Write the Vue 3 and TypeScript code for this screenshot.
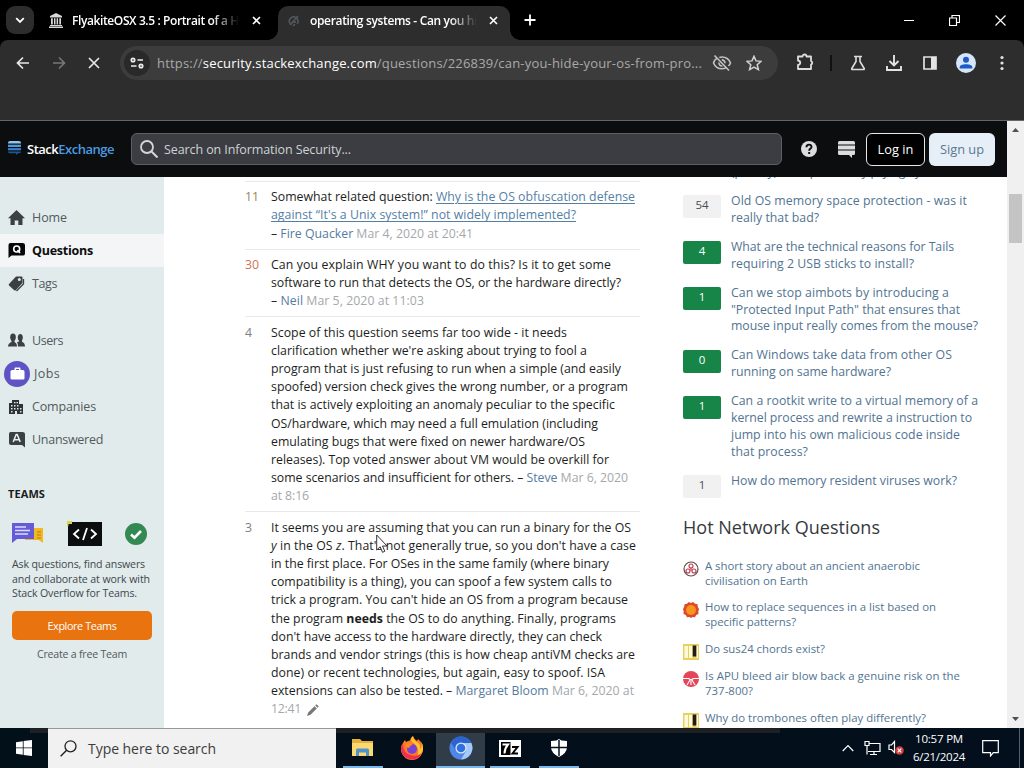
<script setup lang="ts">
import type { Directive } from 'vue'

interface Seg { t: string; k?: 'link' | 'user' | 'date' | 'em' | 'strong' | 'edit' }
interface Line { w: number; s: Seg[] }
interface Comment { score: number; tone: string; lines: Line[] }
interface TextLine { w: number; t: string }

/* Spreads a line's letters so that it takes the given measure. */
const vFit: Directive<HTMLElement, number> = {
  mounted(el, { value }) {
    const n = Math.max(1, (el.textContent ?? '').length)
    const gap = (value - el.getBoundingClientRect().width) / n
    el.style.letterSpacing = gap.toFixed(3) + 'px'
  },
}

const p = (w: number, t: string): Line => ({ w, s: [{ t }] })

const comments: Comment[] = [
  {
    score: 11, tone: 'warm', lines: [
      { w: 364, s: [{ t: 'Somewhat related question: ' }, { t: 'Why is the OS obfuscation defense', k: 'link' }] },
      { w: 305, s: [{ t: 'against “It\'s a Unix system!” not widely implemented?', k: 'link' }] },
      { w: 202, s: [{ t: '– ' }, { t: 'Fire Quacker', k: 'user' }, { t: ' Mar 4, 2020 at 20:41', k: 'date' }] },
    ],
  },
  {
    score: 30, tone: 'hot', lines: [
      p(340, 'Can you explain WHY you want to do this? Is it to get some'),
      p(350, 'software to run that detects the OS, or the hardware directly?'),
      { w: 153, s: [{ t: '– ' }, { t: 'Neil', k: 'user' }, { t: ' Mar 5, 2020 at 11:03', k: 'date' }] },
    ],
  },
  {
    score: 4, tone: 'cool', lines: [
      p(296, 'Scope of this question seems far too wide - it needs'),
      p(316, 'clarification whether we\'re asking about trying to fool a'),
      p(350, 'program that is just refusing to run when a simple (and easily'),
      p(357, 'spoofed) version check gives the wrong number, or a program'),
      p(344, 'that is actively exploiting an anomaly peculiar to the specific'),
      p(327, 'OS/hardware, which may need a full emulation (including'),
      p(314, 'emulating bugs that were fixed on newer hardware/OS'),
      p(338, 'releases). Top voted answer about VM would be overkill for'),
      { w: 357, s: [{ t: 'some scenarios and insufficient for others. – ' }, { t: 'Steve', k: 'user' }, { t: ' Mar 6, 2020', k: 'date' }] },
      { w: 38, s: [{ t: 'at 8:16', k: 'date' }] },
    ],
  },
  {
    score: 3, tone: 'cool', lines: [
      p(360, 'It seems you are assuming that you can run a binary for the OS'),
      { w: 365, s: [{ t: 'y', k: 'em' }, { t: ' in the OS ' }, { t: 'z', k: 'em' }, { t: '. That\'s not generally true, so you don\'t have a case' }] },
      p(338, 'in the first place. For OSes in the same family (where binary'),
      p(341, 'compatibility is a thing), you can spoof a few system calls to'),
      p(357, 'trick a program. You can\'t hide an OS from a program because'),
      { w: 345, s: [{ t: 'the program ' }, { t: 'needs', k: 'strong' }, { t: ' the OS to do anything. Finally, programs' }] },
      p(331, 'don\'t have access to the hardware directly, they can check'),
      p(364, 'brands and vendor strings (this is how cheap antiVM checks are'),
      p(334, 'done) or recent technologies, but again, easy to spoof. ISA'),
      { w: 363, s: [{ t: 'extensions can also be tested. – ' }, { t: 'Margaret Bloom', k: 'user' }, { t: ' Mar 6, 2020 at', k: 'date' }] },
      { w: 30, s: [{ t: '12:41', k: 'date' }] },
    ],
  },
]

const related: { n: number; green: boolean; lines: TextLine[] }[] = [
  { n: 54, green: false, lines: [{ w: 236, t: 'Old OS memory space protection - was it' }, { w: 88, t: 'really that bad?' }] },
  { n: 4, green: true, lines: [{ w: 223, t: 'What are the technical reasons for Tails' }, { w: 183, t: 'requiring 2 USB sticks to install?' }] },
  { n: 1, green: true, lines: [{ w: 218, t: 'Can we stop aimbots by introducing a' }, { w: 229, t: '"Protected Input Path" that ensures that' }, { w: 247, t: 'mouse input really comes from the mouse?' }] },
  { n: 0, green: true, lines: [{ w: 221, t: 'Can Windows take data from other OS' }, { w: 160, t: 'running on same hardware?' }] },
  { n: 1, green: true, lines: [{ w: 247, t: 'Can a rootkit write to a virtual memory of a' }, { w: 241, t: 'kernel process and rewrite a instruction to' }, { w: 229, t: 'jump into his own malicious code inside' }, { w: 77, t: 'that process?' }] },
  { n: 1, green: false, lines: [{ w: 226, t: 'How do memory resident viruses work?' }] },
]

const hot: { icon: string; lines: TextLine[] }[] = [
  { icon: 'scifi', lines: [{ w: 215, t: 'A short story about an ancient anaerobic' }, { w: 103, t: 'civilisation on Earth' }] },
  { icon: 'mma', lines: [{ w: 231, t: 'How to replace sequences in a list based on' }, { w: 91, t: 'specific patterns?' }] },
  { icon: 'music', lines: [{ w: 120, t: 'Do sus24 chords exist?' }] },
  { icon: 'avia', lines: [{ w: 255, t: 'Is APU bleed air blow back a genuine risk on the' }, { w: 48, t: '737-800?' }] },
  { icon: 'music', lines: [{ w: 221, t: 'Why do trombones often play differently?' }] },
]
</script>

<template>
  <div class="screen">
    <div class="tabs">
      <div class="tabsearch"><svg width="10" height="7" viewBox="0 0 10 7"><path d="M1.2 1.2 5 5l3.8-3.8" fill="none" stroke="#fff" stroke-width="1.8" /></svg></div>
      <div class="tab first">
        <svg width="14" height="15" viewBox="0 0 14 15"><path d="M7 0 13 3v1.5H1V3zM2 5.3h1.8v6.2H2zM5 5.3h1.5v6.2H5zM7.6 5.3h1.5v6.2H7.6zM10.3 5.3H12v6.2h-1.7zM1 12h12v.9H1zM0 13.6h14V15H0z" fill="#d8d8d8" /></svg>
        <span class="ttl"><span v-fit="167">FlyakiteOSX 3.5 : Portrait of a H</span></span>
        <svg class="x" width="9" height="9" viewBox="0 0 9 9"><path d="m1 1 7 7M8 1 1 8" stroke="#fff" stroke-width="1.6" /></svg>
      </div>
      <div class="tab active">
        <svg width="12" height="13" viewBox="0 0 12 13"><path d="M2 9.5A4.3 4.3 0 1 1 9 10M2 11 10 2M4 8h4M5 12l2-2" fill="none" stroke="#555a5e" stroke-width="1.5" /></svg>
        <span class="ttl"><span v-fit="167">operating systems - Can you hi</span></span>
        <svg class="x" width="9" height="9" viewBox="0 0 9 9"><path d="m1 1 7 7M8 1 1 8" stroke="#fff" stroke-width="1.6" /></svg>
      </div>
      <svg class="plus" width="12" height="12" viewBox="0 0 12 12"><path d="M6 .5v11M.5 6h11" stroke="#fff" stroke-width="1.8" /></svg>
      <div class="winbtns">
        <svg width="10" height="10" viewBox="0 0 10 10"><path d="M0 5.5h10" stroke="#fff" /></svg>
        <svg width="11" height="11" viewBox="0 0 11 11"><path d="M.5 3h7v7.5h-7zM3 3V.5h7.500v7H8" fill="none" stroke="#fff" stroke-width="1.2" /></svg>
        <svg width="11" height="11" viewBox="0 0 11 11"><path d="m.5.500 10 10M10.500.500l-10 10" stroke="#fff" stroke-width="1.2" /></svg>
      </div>
    </div>

    <div class="toolbar">
      <div class="toolrow">
        <div class="navs">
          <svg width="14" height="14" viewBox="0 0 14 14"><path d="M13 7H2M7 1.500 1.500 7 7 12.500" fill="none" stroke="#e8e8e8" stroke-width="1.7" /></svg>
          <svg width="14" height="14" viewBox="0 0 14 14"><path d="M1 7h11M7 1.500 12.500 7 7 12.500" fill="none" stroke="#777" stroke-width="1.6" /></svg>
          <svg width="12" height="12" viewBox="0 0 12 12"><path d="m1 1 10 10M11 1 1 11" stroke="#e8e8e8" stroke-width="1.7" /></svg>
        </div>
        <div class="omni">
          <div class="site"><svg width="14" height="12" viewBox="0 0 14 12"><g fill="none" stroke="#eee" stroke-width="1.7"><circle cx="3" cy="3" r="1.700" /><path d="M7.500 3H13M1 9h5.500" /><circle cx="11" cy="9" r="1.700" /></g></svg></div>
          <span class="url"><span v-fit="545">https://<b>security.stackexchange.com</b>/questions/226839/can-you-hide-your-os-from-pro...</span></span>
          <svg class="eye" width="20" height="18" viewBox="0 0 20 18"><g fill="none" stroke="#c4c4c4" stroke-width="1.600"><path d="M5 4.200C3.500 5.200 2.200 6.800 1.500 9c1.500 3.500 4.800 5.800 8.500 5.800 1.500 0 2.800-.3 4-.9M7.300 3.400A9 9 0 0 1 10 3c3.700 0 7 2.400 8.500 6a9 9 0 0 1-2 3M7 8.500A3 3 0 0 0 10.500 12M9.800 5.900A3.100 3.100 0 0 1 13 9.200M2.500 1.500l14.500 15" /></g></svg>
          <svg width="16" height="16" viewBox="0 0 16 16"><path d="m8 1.300 2 4.600 5 .45-3.800 3.300L12.400 14.600 8 12l-4.400 2.600 1.200-4.950L1 6.350l5-.45z" fill="none" stroke="#d0d0d0" stroke-width="1.5" /></svg>
        </div>
        <svg class="ext" width="18" height="18" viewBox="0 0 18 18"><path d="M2 3.500h4.500a2 2 0 0 1 4 0H15V8a2 2 0 0 1 0 3.700V16H2v-4c3-.5 3-4 0-4.500z" fill="none" stroke="#ddd" stroke-width="1.8" stroke-linejoin="round" /></svg>
        <i class="sep" />
        <div class="tools">
          <svg width="16" height="16" viewBox="0 0 16 16"><path d="M4 1.500h8M6 1.500v5L1.800 13.500c-.3.600 0 1 .7 1h11c.7 0 1-.4.7-1L10 6.500v-5" fill="none" stroke="#ddd" stroke-width="1.600" /></svg>
          <svg width="16" height="16" viewBox="0 0 16 16"><path d="M8 0v10M3.500 6 8 10.500 12.500 6M1 11v4h14v-4" fill="none" stroke="#e4e4e4" stroke-width="1.900" /></svg>
          <svg width="14" height="14" viewBox="0 0 14 14"><path d="M1 1h12v12H1z" fill="none" stroke="#e4e4e4" stroke-width="1.700" /><path d="M8 1h5v12H8z" fill="#e4e4e4" /></svg>
          <svg width="20" height="20" viewBox="0 0 20 20"><circle cx="10" cy="10" r="10" fill="#d7e5fb" /><circle cx="10" cy="6.800" r="3" fill="#1a5bc4" /><path d="M3.700 15.500v-1.200c0-2.200 3.500-3 6.300-3s6.300.8 6.300 3v1.200z" fill="#1a5bc4" /></svg>
          <svg width="4" height="16" viewBox="0 0 4 16"><g fill="#e4e4e4"><circle cx="2" cy="2.500" r="1.600" /><circle cx="2" cy="8" r="1.600" /><circle cx="2" cy="13.500" r="1.600" /></g></svg>
        </div>
      </div>
    </div>

    <div class="view">
      <div class="page">
        <header class="top">
          <svg class="selogo" width="13" height="14" viewBox="0 0 13 14"><path d="M0 2.600V2q0-2 2-2h9q2 0 2 2v.6z" fill="#8fc5ee" /><path d="M0 3.700h13v2.300H0z" fill="#4a9ae0" /><path d="M0 7.100h13v2.200H0z" fill="#3680d2" /><path d="M0 10.400h13q0 1.900-2 1.900h-1L8 14v-1.700H2q-2 0-2-1.900z" fill="#20558e" /></svg>
          <span class="brand"><span v-fit="87"><b>Stack</b><em>Exchange</em></span></span>
          <div class="search">
            <svg width="18" height="18" viewBox="0 0 18 18"><circle cx="7" cy="7" r="6" fill="none" stroke="#d4d7da" stroke-width="1.800" /><path d="m11.500 11.500 6 6" stroke="#d4d7da" stroke-width="2" /></svg>
            <span v-fit="187">Search on Information Security...</span>
          </div>
          <svg class="help" width="16" height="16" viewBox="0 0 16 16"><circle cx="8" cy="8" r="8" fill="#dcdddf" /><path d="M5.400 6.200C5.500 2.700 10.700 2.900 10.500 6c-.1 1.600-2.300 1.700-2.300 3.700M8.200 11v2" fill="none" stroke="#0c0d0f" stroke-width="1.900" /></svg>
          <svg class="inbox" width="17" height="18" viewBox="0 0 17 18"><path d="M0 4.500V2.500Q0 1 1.500 1h14Q17 1 17 2.500v2zM0 5.500h17v4H0zM0 10.500h17v3q0 1.500-1.500 1.500H14v3l-3-3H1.500Q0 15 0 13.500z" fill="#dcdddf" /></svg>
          <div class="btn login"><span v-fit="36">Log in</span></div>
          <div class="btn signup"><span v-fit="44">Sign up</span></div>
        </header>

        <div class="cols">
          <aside class="side">
            <div class="nav home"><svg width="17" height="17" viewBox="0 0 17 17"><path d="M8.500 1 17 9.300h-2.500V16H10.300v-4.500H6.700V16H2.500V9.300H0z" fill="#3b4045" /></svg><span v-fit="35">Home</span></div>
            <div class="nav on"><svg width="17" height="17" viewBox="0 0 17 17"><path d="M2.500 1h12Q17 1 17 3v8.500q0 2-2 2H3.500L.5 16V3q0-2 2-2z" fill="#060708" /><circle cx="8.700" cy="7" r="3" fill="none" stroke="#fff" stroke-width="1.600" /><path d="m9.500 8 2.500 3" stroke="#fff" stroke-width="1.600" /></svg><span v-fit="61">Questions</span></div>
            <div class="nav tags"><svg width="17" height="17" viewBox="0 0 17 17"><path d="m1 9 7-7.500h5.500q1 0 1 1V8L8 15q-1 1-2 0L1 10.500q-.7-.7 0-1.500z" fill="#3b4045" /><path d="M15.500 4v5l-7 7" fill="none" stroke="#3b4045" stroke-width="1.300" /><circle cx="11.300" cy="4.500" r="1.500" fill="#e1ebeb" /></svg><span v-fit="25">Tags</span></div>
            <div class="nav users"><svg width="17" height="15" viewBox="0 0 17 15"><g fill="#3b4045"><ellipse cx="5" cy="4.300" rx="2.800" ry="3.700" /><path d="M0 13.500q0-3 3.500-4.500V7h3v2Q9 10 9 13.500z" /><ellipse cx="12.300" cy="4.500" rx="2.500" ry="3.500" /><path d="M10 13.500q0-3-1-4.300l2-.7V7h3v1.700q3 1.300 3 4.800z" /></g></svg><span v-fit="31">Users</span></div>
            <div class="nav jobs"><i class="disc"><svg width="15" height="13" viewBox="0 0 15 13"><path d="M4.500 3V1.500q0-1 1-1h4q1 0 1 1V3h2.500q1.500 0 1.500 1.500v7q0 1-1.500 1H2q-1.500 0-1.500-1v-7Q.5 3 2 3zm1.500 0h3V2H6z" fill="#fff" /></svg></i><span v-fit="26">Jobs</span></div>
            <div class="nav"><svg width="17" height="16" viewBox="0 0 17 16"><path d="M1 15V4h3V1h7v4h4v10H9v-3H7v3zM3 6v1.500h1.500V6zm3 0v1.500h1.500V6zm3 0v1.500h1.500V6zM3 9v1.500h1.500V9zm3 0v1.500h1.500V9zm3 0v1.500h1.500V9zm3 0v1.500h1.500V9zM6 3v1.300h1.500V3zm2.500 0v1.300H10V3zM3 12v1.500h1.500V12zm9 0v1.500h1.500V12z" fill="#2f3337" fill-rule="evenodd" /></svg><span v-fit="64">Companies</span></div>
            <div class="nav"><svg width="17" height="17" viewBox="0 0 17 17"><path d="M2.500 1h12Q17 1 17 3v13.500l-3-2.500H3Q1 14 1 12V3q0-2 1.500-2z" fill="#3b4045" /><path d="m5.200 11 3-7.500h1l3 7.500M6.500 8.700h4.500" fill="none" stroke="#e8efef" stroke-width="1.500" /></svg><span v-fit="71">Unanswered</span></div>
            <div class="teams"><span v-fit="37">TEAMS</span></div>
            <div class="art">
              <svg width="32" height="21" viewBox="0 0 32 21"><path d="M13 5h18v15l-4-3H13z" fill="#f2b823" /><path d="M25 9h4M25 12h4M25 15h4" stroke="#b97f0a" /><path d="M0 0h22v16H5l-5 4z" fill="#635bd8" /><path d="M3 4h11M3 7.500h15M3 11h13" stroke="#dddcff" stroke-width="1.500" /></svg>
              <svg width="35" height="25" viewBox="0 0 35 25"><path d="M1 1h34v24H1z" fill="#0b0d0e" /><path d="M0 0h5v5H0z" fill="#d8d648" /><path d="M1.500 3H6v4H1.500z" fill="#0b0d0e" /><path d="m12 8.500-5 4.500 5 4.500M24 8.500l5 4.500-5 4.500M20 7l-4 12" fill="none" stroke="#fff" stroke-width="1.800" /></svg>
              <svg width="22" height="22" viewBox="0 0 22 22"><circle cx="11" cy="11" r="11" fill="#328a52" /><path d="m6 11.500 3.500 3.200L16 8" fill="none" stroke="#fff" stroke-width="2.600" /></svg>
            </div>
            <div class="pitch"><div><span v-fit="133">Ask questions, find answers</span></div><div><span v-fit="138">and collaborate at work with</span></div><div><span v-fit="125">Stack Overflow for Teams.</span></div></div>
            <div class="explore"><span v-fit="69">Explore Teams</span></div>
            <div class="free"><span v-fit="90">Create a free Team</span></div>
          </aside>

          <main class="comments">
            <div v-for="(c, i) in comments" :key="i" class="comment">
              <div class="score" :class="c.tone">{{ c.score }}</div>
              <div class="body">
                <div v-for="(l, j) in c.lines" :key="j" class="line"><span v-fit="l.w" class="fit"><span v-for="(s, k) in l.s" :key="k" :class="s.k">{{ s.t }}</span></span><svg v-if="i === 3 && j === 10" class="pen" width="12" height="12" viewBox="0 0 12 12"><path d="m0 12 1.200-3.500 6.300-6.300 2.300 2.300-6.300 6.300zM8.200 1.500 9.500.200l2.300 2.300-1.300 1.300z" fill="#777" /></svg></div>
              </div>
            </div>
          </main>

          <section class="right">
            <div class="cut"><span v-fit="207">(privacy) from potentially prying eyes?</span></div>
            <div v-for="(r, i) in related" :key="i" class="rel">
              <div class="num" :class="{ green: r.green }">{{ r.n }}</div>
              <div class="rtext"><div v-for="(l, j) in r.lines" :key="j"><span v-fit="l.w" class="fit">{{ l.t }}</span></div></div>
            </div>
            <h4><span v-fit="197">Hot Network Questions</span></h4>
            <div v-for="(h, i) in hot" :key="i" class="hot">
              <svg v-if="h.icon === 'scifi'" width="16" height="16" viewBox="0 0 16 16"><circle cx="8" cy="8" r="7" fill="#fff" stroke="#5c4c50" stroke-width="1.200" /><g fill="none" stroke="#c4384a" stroke-width="1.100"><circle cx="8" cy="5" r="2" /><circle cx="5" cy="10" r="2" /><circle cx="11" cy="10" r="2" /><path d="M8 7v3" /></g></svg>
              <svg v-else-if="h.icon === 'mma'" width="16" height="16" viewBox="0 0 16 16"><path d="m5.800 0 2.200 1 2.200-1 1.800 1.800 2.500.5.300 2.500L16 7l-.7 2.500.2 2.500-2.300 1-1.200 2.300-2.500-.3L8 16l-1.500-1-2.500.3L2.800 13 .5 12l.2-2.500L0 7l1.200-2.200.3-2.500 2.500-.5z" fill="#dc4a2c" /><circle cx="8" cy="8" r="5" fill="#f9941e" /></svg>
              <svg v-else-if="h.icon === 'music'" width="16" height="16" viewBox="0 0 16 16"><path d="M0 0h16v16H0z" fill="#e9cf5c" /><path d="M1.500 2H5v12H1.500zM6 2h3.500v12H6zM13.500 2H15v12h-1.500z" fill="#fffbd8" /><path d="M9.700 1.500h3.600v11H9.700z" fill="#221b18" /></svg>
              <svg v-else width="16" height="16" viewBox="0 0 16 16"><circle cx="8" cy="8" r="8" fill="#e3465a" /><path d="M0 7.500h5.500M10.500 7.500H16M7 9l-3 5M9 9l3 5M8 10v4M5.500 7.500 8 9l2.500-1.500" stroke="#fff" stroke-width="1.100" fill="none" /></svg>
              <div class="htext"><div v-for="(l, j) in h.lines" :key="j"><span v-fit="l.w" class="fit">{{ l.t }}</span></div></div>
            </div>
          </section>
        </div>
      </div>
      <div class="scroll">
        <svg width="17" height="17" viewBox="0 0 17 17"><path d="m5 11 3.500-4 3.500 4z" fill="#505050" /></svg>
        <div class="thumb" />
        <svg class="down" width="17" height="17" viewBox="0 0 17 17"><path d="m5 6 3.500 4L12 6z" fill="#505050" /></svg>
      </div>
    </div>

    <div class="taskbar">
      <div class="start"><svg width="16" height="16" viewBox="0 0 16 16"><path d="M0 2.200 6.800 1.200v6.300H0zM7.600 1.100 16 0v7.500H7.600zM0 8.300h6.800v6.500L0 13.800zM7.600 8.300H16V16l-8.400-1.100z" fill="#fff" /></svg></div>
      <div class="tsearch"><svg width="17" height="17" viewBox="0 0 17 17"><circle cx="10.500" cy="6.300" r="5.500" fill="none" stroke="#222" stroke-width="1.300" /><path d="m6.600 10.200-6 6" stroke="#222" stroke-width="1.400" /></svg><span v-fit="128">Type here to search</span></div>
      <div class="apps">
        <div class="app run"><svg width="24" height="20" viewBox="0 0 24 20"><path d="M1 1h8l2 2h11v15H1z" fill="#e6b13a" /><path d="M1 5h21v13H1z" fill="#fbd870" /><path d="M5 18v-6q0-1.500 1.500-1.500h10q1.500 0 1.500 1.500v6h-3v-3.500H8V18z" fill="#4e93c9" /></svg></div>
        <div class="app"><svg width="24" height="24" viewBox="0 0 24 24"><path d="M3 7q1-2 2-3l1 2q2-1.500 4-1.500Q10 2 13 0q1 3 4 5l1-2q5 4 5 10a11 11 0 0 1-22 0q0-4 2-6z" fill="#ff7a1f" /><path d="M13 0q0 4 4 6t3 7q3-2 1-8 2 3 2 8-1 7-7 9 3-4 2-9-2-5-6-7-2-3 1-6z" fill="#ffc52e" /><path d="M1 12q0 10 11 11.500 7 0 10-7-4 4-10 3Q3 18 3 8q-2 1-2 4z" fill="#ef2d55" /><circle cx="12" cy="13" r="5" fill="#7b41d4" /><path d="M6 8q4-2 7 1-3 0-4 3-4-1-3-4z" fill="#ff8b26" /></svg></div>
        <div class="app run cur"><svg width="24" height="24" viewBox="0 0 24 24"><circle cx="12" cy="12" r="11.500" fill="#4f87e8" /><path d="M12 .5A11.500 11.500 0 0 0 2 6.300L7 15l5-8h10.300A11.500 11.500 0 0 0 12 .5z" fill="#2c63cf" /><path d="M22.300 7H12l5 8-5 8.500A11.500 11.500 0 0 0 22.300 7z" fill="#a5c9f8" /><circle cx="12" cy="12" r="5.600" fill="#dce9fc" /><circle cx="12" cy="12" r="4.300" fill="#2e70df" /></svg></div>
        <div class="app run"><svg width="22" height="17" viewBox="0 0 22 17"><path d="M0 0h22v17H0z" fill="#fff" /><path d="M2 2h9.500v13H2z" fill="#000" /><path d="M3.500 4.500h5.500q-3.500 4-3.500 9" fill="none" stroke="#fff" stroke-width="2" /><path d="M13 7h5.500L13.500 13.500H19" fill="none" stroke="#000" stroke-width="2" /></svg></div>
        <div class="app run"><svg width="18" height="18" viewBox="0 0 18 18"><path d="m9 0 2.500 1.500L17 2v6q0 6-8 10Q1 14 1 8V2l5.500-.5z" fill="#fff" /><path d="M9 1v16M1 8.500h16" stroke="#06131f" stroke-width="1.500" /></svg></div>
      </div>
      <div class="tray">
        <svg class="chev" width="12" height="8" viewBox="0 0 12 8"><path d="M.700 7 6 1.500 11.300 7" fill="none" stroke="#fff" stroke-width="1.200" /></svg>
        <svg class="net" width="17" height="15" viewBox="0 0 17 15"><path d="M5 2.500h11v8H4M10 10.500v3M6 13.500h7M1 .500h4v4H1zM3 4.500v9" fill="none" stroke="#fff" stroke-width="1.200" /></svg>
        <svg class="vol" width="16" height="16" viewBox="0 0 16 16"><path d="M1 5h2.500L6.500 1.500v11L3.500 9.500H1z" fill="none" stroke="#fff" stroke-width="1.200" /><circle cx="11.500" cy="10.500" r="4.300" fill="#d13c3c" /><path d="m9.700 8.700 3.600 3.600M13.300 8.700l-3.600 3.600" stroke="#fff" stroke-width="1.200" /></svg>
        <div class="clock"><div><span v-fit="48">10:57 PM</span></div><div><span v-fit="52">6/21/2024</span></div></div>
        <svg class="note" width="17" height="17" viewBox="0 0 17 17"><path d="M.700.700h15.600v12h-5L8.500 16v-3.300H.700z" fill="none" stroke="#fff" stroke-width="1.200" /></svg>
        <i class="peek" />
      </div>
      <i class="shade" />
    </div>

    <svg class="cursor" width="14" height="21" viewBox="0 0 14 21"><path d="M.700 1v15l3.500-3.200 2.300 5.500 2.300-1-2.300-5.300H11z" fill="#fff" stroke="#333" stroke-width="1" /></svg>
  </div>
</template>

<style>
body { margin: 0; overflow: hidden; }
</style>

<style scoped>
.screen { position: relative; width: 1024px; height: 768px; overflow: hidden; display: flex; flex-direction: column; background: #000; font-family: "Open Sans", "Noto Sans", sans-serif; }
.screen * { box-sizing: border-box; }
svg { display: block; flex: none; }
span { white-space: pre; }

.tabs { height: 40px; display: flex; background: #000; flex: none; }
.tabsearch { width: 28px; height: 28px; margin: 6px 0 0 6px; border-radius: 9px; background: #2d2d2d; display: flex; align-items: center; justify-content: center; flex: none; }
.tab { display: flex; align-items: center; height: 34px; margin-top: 6px; padding-bottom: 5px; font-size: 12px; font-weight: 600; color: #fff; flex: none; }
.tab.first { width: 244px; padding-left: 15px; }
.tab.first .ttl { margin-left: 9px; }
.tab.active { width: 232px; padding-left: 10px; background: #2d2d2d; border-radius: 10px 10px 0 0; position: relative; }
.tab.active::before, .tab.active::after { content: ""; position: absolute; bottom: 0; width: 10px; height: 10px; }
.tab.active::before { left: -10px; background: radial-gradient(circle at 0 0, transparent 9.5px, #2d2d2d 10px); }
.tab.active::after { right: -10px; background: radial-gradient(circle at 100% 0, transparent 9.5px, #2d2d2d 10px); }
.ttl { width: 167px; overflow: hidden; margin-left: 10px; -webkit-mask-image: linear-gradient(90deg, #000 84%, transparent 100%); }
.ttl span { display: inline-block; }
.x { margin-left: 12px; }
.tab.first .x { margin-left: 13px; }
.plus { margin: 14px 0 0 14px; }
.winbtns { display: flex; gap: 35px; margin: 15px 0 0 auto; padding-right: 18px; }

.toolbar { height: 81px; background: #000; flex: none; }
.toolrow { height: 81px; padding-top: 6px; display: flex; align-items: flex-start; background: #2d2d2d; border-radius: 8px 8px 0 0; border-bottom: 1px solid #666; }
.navs { width: 120px; height: 34px; display: flex; align-items: center; gap: 22px; padding-left: 16px; flex: none; }
.omni { width: 658px; height: 34px; border-radius: 17px; background: #3c3c3c; display: flex; align-items: center; padding-left: 4px; flex: none; }
.site { width: 26px; height: 26px; border-radius: 50%; background: #292929; display: flex; align-items: center; justify-content: center; flex: none; }
.url { width: 562px; padding-left: 7px; font-size: 13px; color: #a9a9a9; flex: none; }
.url span { display: inline-block; }
.url b { color: #fff; font-weight: 400; }
.eye { margin-right: 14px; }
.ext { margin: 7px 0 0 18px; }
.sep { width: 2px; height: 16px; margin: 9px 17px 0 16px; background: #111; }
.tools { display: flex; align-items: center; height: 34px; gap: 20px; padding-left: 1px; }
.tools svg:nth-child(3) { margin-left: 1px; }
.tools svg:nth-child(4) { margin-left: -1px; }
.tools svg:nth-child(5) { margin-left: 4px; }

.view { height: 607px; display: flex; overflow: hidden; flex: none; background: #fff; }
.page { width: 1007px; height: 607px; flex: none; overflow: hidden; }
.top { height: 56px; background: #0c0d0f; display: flex; align-items: center; padding-left: 8px; }
.selogo { margin-top: -2px; }
.brand { width: 110px; padding-left: 6px; margin-top: -1px; font-size: 13px; color: #fff; }
.brand span { display: inline-block; }
.brand b { font-weight: 600; }
.brand em { font-style: normal; color: #4a9be0; font-weight: 600; }
.search { width: 651px; height: 32px; border: 1px solid #5c6066; border-radius: 6px; background: #3b3d42; display: flex; align-items: center; padding-left: 8px; gap: 6px; color: #cfd2d5; font-size: 12.500px; flex: none; }
.help { margin-left: 19px; }
.inbox { margin-left: 21px; margin-right: 11px; }
.btn { height: 33px; border-radius: 6px; display: flex; align-items: center; justify-content: center; font-size: 12.800px; flex: none; }
.login { width: 59px; border: 1px solid #e8e8e8; color: #fff; background: #000; }
.signup { width: 66px; margin-left: 4px; background: #e6eff7; color: #5b7790; }
.cols { display: flex; height: 551px; }

.side { width: 164px; background: #e1ebeb; padding-top: 24px; flex: none; font-size: 12.500px; color: #525960; }
.nav { height: 33px; display: flex; align-items: center; padding-left: 8px; gap: 7px; }
.nav.on { background: #f3f5f6; color: #0c0d0e; font-weight: 700; }
.nav.users { margin-top: 24px; }
.disc { width: 26px; height: 26px; margin-left: -4px; margin-right: -3px; border-radius: 50%; background: #5e52c4; display: flex; align-items: center; justify-content: center; flex: none; }
.teams { margin: 29px 0 0 8px; font-size: 11px; line-height: 18px; font-weight: 700; color: #1a1d20; }
.art { display: flex; align-items: center; height: 25px; margin: 18px 0 0 12px; }
.art svg:nth-child(2) { margin-left: 23px; }
.art svg:nth-child(3) { margin-left: 23px; }
.pitch { margin: 11px 0 0 12px; font-size: 10.600px; line-height: 14.500px; color: #40474d; }
.explore { width: 140px; height: 29px; margin: 10.500px 0 0 12px; border-radius: 5px; background: #e8730f; color: #fff; font-size: 10.800px; display: flex; align-items: center; justify-content: center; }
.free { width: 140px; margin: 6px 0 0 12px; text-align: center; font-size: 10.600px; line-height: 16px; }

.comments { width: 395px; margin-left: 81px; padding-top: 4px; flex: none; }
.comment { border-top: 1px solid #e8e9ea; padding: 6.300px 0 5.800px; display: flex; line-height: 18.200px; font-size: 12.300px; color: #1b1e21; }
.score { width: 26px; font-size: 12.300px; }
.warm { color: #96825c; }
.score.hot { color: #cc7455; }
.cool { color: #7c8085; }
.line { height: 18.200px; display: flex; align-items: center; white-space: nowrap; }
.fit { display: inline-block; }
.link { color: #5580a6; text-decoration: underline; text-underline-offset: 2px; }
.user { color: #567ba0; }
.date { color: #a4a8ac; }
.em { font-style: italic; }
.strong { font-weight: 700; }
.pen { margin-left: 6px; }

.right { width: 300px; margin-left: 43px; font-size: 12.300px; color: #527492; flex: none; overflow: hidden; }
.cut { height: 16.900px; line-height: 16.900px; padding-left: 48px; margin-top: -13px; margin-bottom: 12px; }
.rel { display: flex; line-height: 16.900px; margin-bottom: 12.100px; }
.num { width: 38px; height: 23px; margin: 2.300px 10px 0 0; border-radius: 2px; background: #f1f1f1; color: #4a4e52; text-align: center; line-height: 20px; font-size: 11.500px; flex: none; }
.num.green { background: #178548; color: #fff; }
.rtext div { height: 16.900px; }
h4 { margin: 16px 0 0; font-size: 18px; font-weight: 400; line-height: 26px; color: #35393d; }
h4 + .hot { margin-top: 18.500px; }
.right .hot { display: flex; gap: 6px; line-height: 14.900px; margin-bottom: 11.900px; font-size: 11.400px; }
.hot svg { margin-top: 2px; margin-bottom: -4px; }
.htext div { height: 14.900px; }

.scroll { width: 17px; background: #f0f0f0; display: flex; flex-direction: column; flex: none; }
.thumb { width: 13px; height: 49px; margin: 56px 0 0 2px; background: #c4c4c4; }
.down { margin-top: auto; }

.taskbar { height: 40px; display: flex; background: linear-gradient(90deg, #021019, #030f1c); position: relative; flex: none; }
.start { width: 48px; display: flex; align-items: center; justify-content: center; }
.tsearch { width: 288px; background: #f1f1f1; display: flex; align-items: center; padding-left: 12px; gap: 11px; font-size: 14px; color: #3c3c3c; position: relative; z-index: 1; border-top: 1px solid #999; }
.apps { display: flex; margin-left: 2px; }
.app { width: 49px; height: 40px; display: flex; align-items: center; justify-content: center; position: relative; }
.app.run::after { content: ""; position: absolute; left: 5px; right: 4px; bottom: 0; height: 2px; background: #76b9ed; }
.app.cur { background: #303d49; }
.app.cur::after { left: 0; right: 0; }
.tray { margin-left: auto; display: flex; align-items: center; color: #fff; }
.net { margin-left: 10px; }
.vol { margin-left: 7px; }
.clock { width: 52px; margin: 0 17px 0 9px; font-size: 11.500px; line-height: 18px; text-align: center; }
.clock div { height: 18px; }
.peek { width: 1px; height: 40px; margin: 0 4px 0 20px; background: #55606a; }
.shade { position: absolute; left: 30px; top: 0; width: 750px; height: 5px; background: #1e2023; }
.cursor { position: absolute; left: 376px; top: 534px; }
</style>
